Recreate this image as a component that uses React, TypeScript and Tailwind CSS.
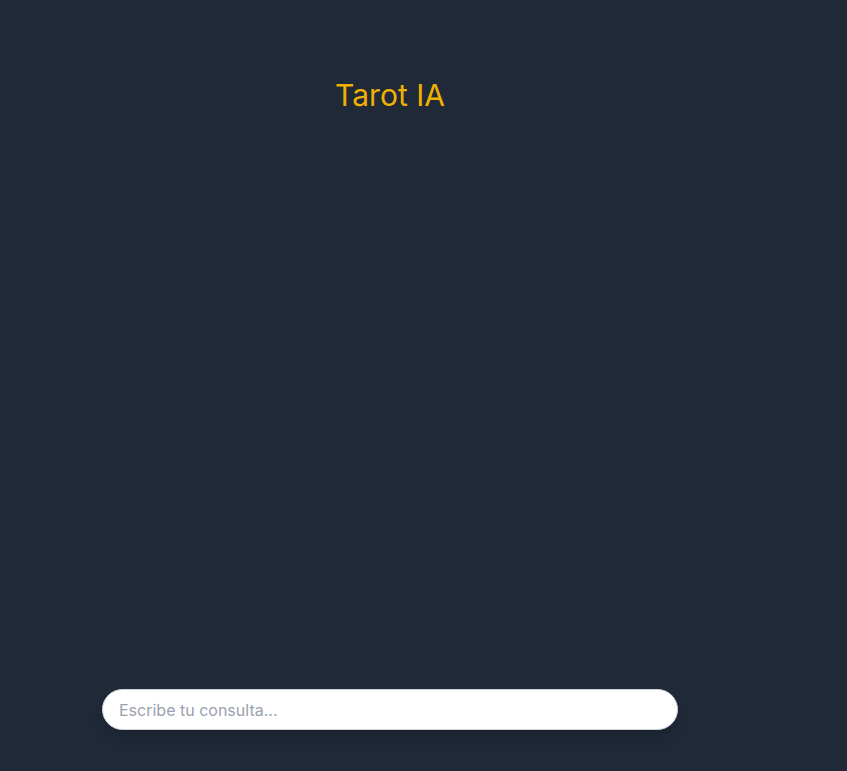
import React from "react";

export default function App() {
  return (
    <div
      className="min-h-screen h-screen bg-[#1f2937] flex"
      style={{ fontFamily: "Inter, 'Noto Sans', sans-serif" }}
    >
      <div className="w-[780px] flex flex-col h-full">
        <h1 className="text-center text-[30px] leading-9 text-[#f0b100] pt-[77px]">
          Tarot IA
        </h1>
        <div className="flex-1" />
        <div className="pb-[41px]">
          <div className="w-[576px] mx-auto shadow-lg rounded-full">
            <input
              type="text"
              placeholder="Escribe tu consulta..."
              className="w-full h-[41px] rounded-full bg-white border border-gray-300 px-4 text-base text-gray-900 placeholder:text-gray-400 outline-none"
            />
          </div>
        </div>
      </div>
    </div>
  );
}
